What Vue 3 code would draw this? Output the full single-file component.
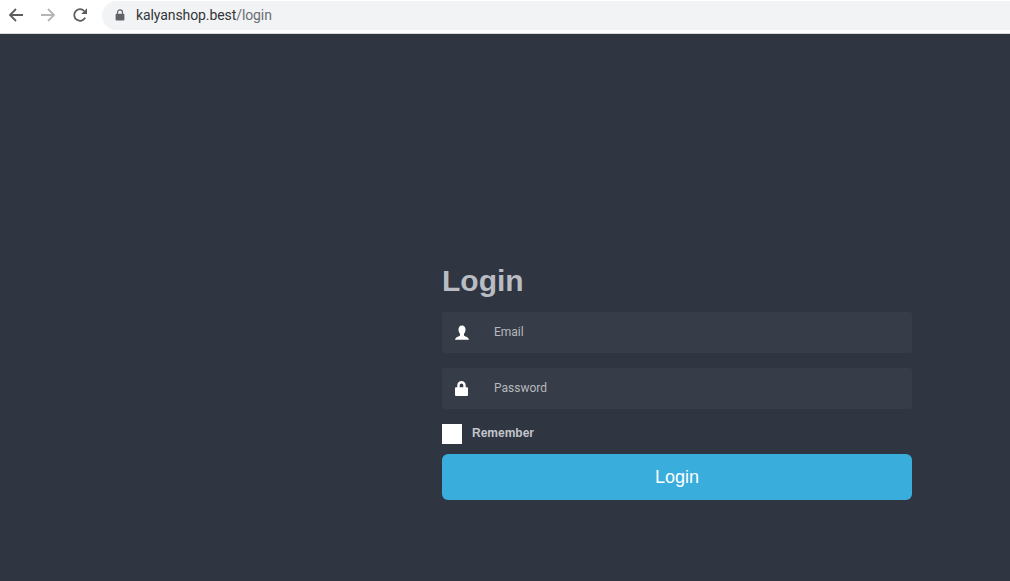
<script setup>
const title = 'Login'
</script>

<template>
  <div class="page">
    <header class="chrome">
      <nav class="nav">
        <svg class="nav-icon" viewBox="0 0 16 16" width="16" height="16">
          <path d="M15 8H2M8 2L2 8l6 6" fill="none" stroke="#5b5d60" stroke-width="1.8" />
        </svg>
        <svg class="nav-icon" viewBox="0 0 16 16" width="16" height="16">
          <path d="M1 8h13M8 2l6 6-6 6" fill="none" stroke="#b4b5b7" stroke-width="1.8" />
        </svg>
        <svg class="nav-icon" viewBox="0 0 16 16" width="16" height="16">
          <path d="M13.2 10.6A5.8 5.8 0 1 1 12.2 4" fill="none" stroke="#5b5d60" stroke-width="1.8" />
          <path d="M15 1.2V7H9.2z" fill="#5b5d60" />
        </svg>
      </nav>
      <div class="address">
        <svg class="lock" viewBox="0 0 10 12" width="10" height="12">
          <path d="M2.5 5V3.4a2.5 2.5 0 0 1 5 0V5" fill="none" stroke="#5f6368" stroke-width="1.2" />
          <rect x="0.6" y="4.8" width="8.8" height="6.6" rx="1" fill="#5f6368" />
        </svg>
        <span class="url">kalyanshop.best<span class="path">/login</span></span>
      </div>
    </header>

    <main class="main">
      <form class="form" @submit.prevent>
        <h1 class="title">{{ title }}</h1>
        <label class="field">
          <svg class="field-icon" viewBox="0 0 16 16" width="16" height="16">
            <path d="M8 .4c2.300 0 3.500 1.700 3.500 4 0 1.700-.6 3.300-1.500 4.200v1.800c0 .8 4.600 1.200 5 4.300H1c.4-3.100 5-3.500 5-4.300V8.600C5.100 7.700 4.500 6.100 4.500 4.400c0-2.300 1.200-4 3.500-4z" fill="#fff" />
          </svg>
          <input class="input" type="text" placeholder="Email" />
        </label>
        <label class="field">
          <svg class="field-icon" viewBox="0 0 16 16" width="16" height="16">
            <path d="M4.500 7V4.200a3 3 0 0 1 6 0V7" fill="none" stroke="#fff" stroke-width="2.400" />
            <rect x="1" y="6.300" width="13" height="8.700" rx="1" fill="#fff" />
          </svg>
          <input class="input" type="password" placeholder="Password" />
        </label>
        <label class="remember">
          <span class="check"></span>
          <span class="remember-text">Remember</span>
        </label>
        <button class="submit" type="submit">Login</button>
      </form>
    </main>
  </div>
</template>

<style>
html, body { margin: 0; background: #2f3541; }
</style>

<style scoped>
.page {
  width: 1010px;
  height: 581px;
  overflow: hidden;
  display: flex;
  flex-direction: column;
  background: #2f3541;
  font-family: "Liberation Sans", Arial, sans-serif;
}
.chrome {
  height: 30px;
  padding-bottom: 3px;
  flex: none;
  display: flex;
  align-items: center;
  background: #fff;
  border-bottom: 1px solid #d8d9da;
  box-sizing: content-box;
}
.nav {
  display: flex;
  align-items: center;
  gap: 16px;
  padding-left: 8px;
  width: 94px;
  box-sizing: border-box;
  flex: none;
}
.nav-icon { display: block; flex: none; }
.address {
  flex: 1;
  height: 29px;
  display: flex;
  align-items: center;
  padding-left: 13px;
  background: #f1f3f4;
  border-radius: 15px 0 0 15px;
  margin-left: 8px;
}
.lock { flex: none; }
.url {
  margin-left: 11px;
  font-family: "Roboto", "Noto Sans", sans-serif;
  font-size: 14px;
  color: #33363a;
  letter-spacing: -0.09px;
}
.path { color: #6a6e73; }
.main {
  flex: 1;
  padding-left: 442px;
}
.form {
  width: 470px;
  display: flex;
  flex-direction: column;
  padding-top: 229px;
}
.title {
  margin: 0 0 14px;
  font-size: 30px;
  line-height: 35px;
  font-weight: 700;
  color: #b9bcc2;
}
.field {
  height: 41px;
  display: flex;
  align-items: center;
  background: #373d48;
  border-radius: 3px;
  margin-bottom: 15px;
}
.field-icon {
  flex: none;
  margin-left: 12px;
}
.input {
  flex: 1;
  min-width: 0;
  margin-left: 24px;
  border: 0;
  outline: 0;
  padding: 0 0 2px;
  background: transparent;
  font: 12px "Roboto", "Liberation Sans", sans-serif;
  color: #c4c6cb;
}
.input::placeholder { color: #b5b8be; opacity: 1; }
.remember {
  display: flex;
  align-items: center;
  gap: 10px;
  font-size: 12px;
  font-weight: 700;
  color: #c3c5cb;
  height: 20px;
}
.remember-text { padding-bottom: 2px; }
.check {
  width: 20px;
  height: 20px;
  background: #fff;
  display: block;
}
.submit {
  height: 46px;
  margin-top: 10px;
  border: 0;
  border-radius: 6px;
  background: #39addb;
  color: #fff;
  font: 18px "Liberation Sans", Arial, sans-serif;
  padding: 0;
}
</style>
